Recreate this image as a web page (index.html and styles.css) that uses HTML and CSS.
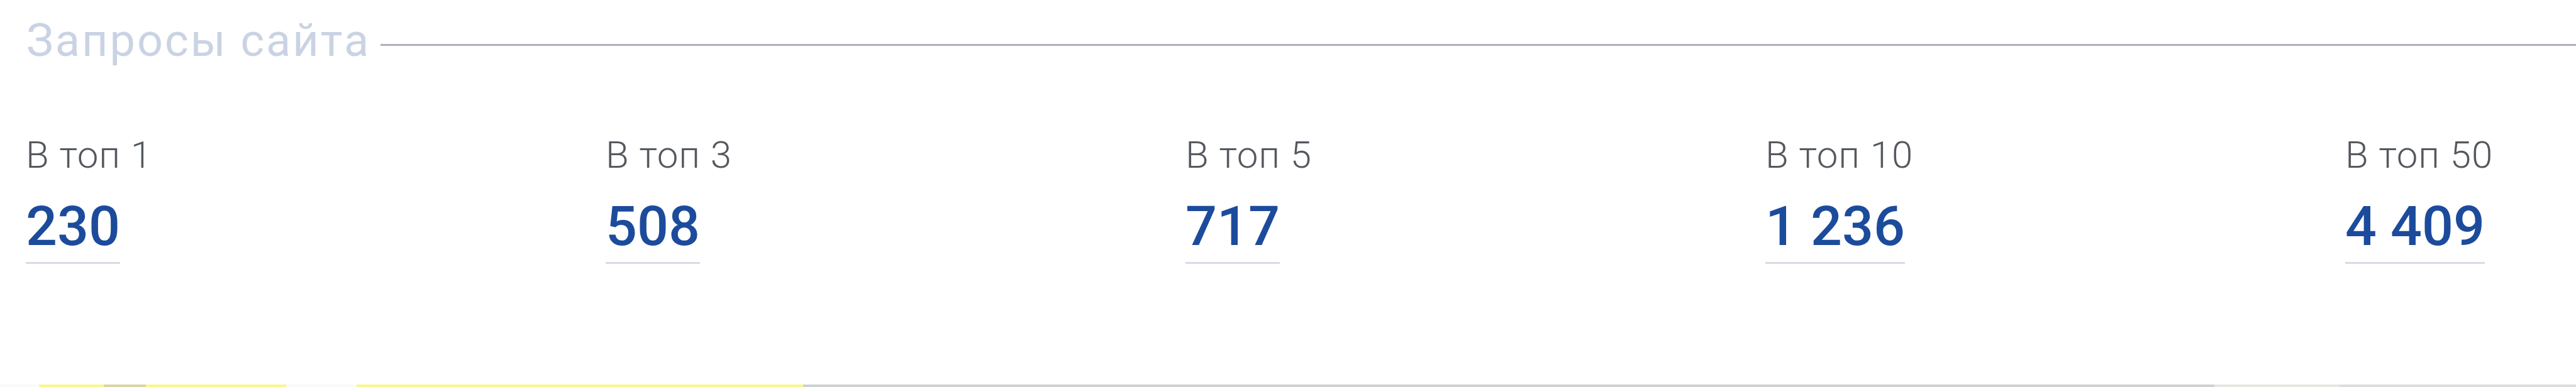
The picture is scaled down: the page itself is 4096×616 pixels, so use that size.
FILE: index.html
```html
<!DOCTYPE html>
<html lang="ru">
<head>
    <meta charset="UTF-8">
    <title>Запросы сайта</title>
    <link rel="stylesheet" href="styles.css">
</head>
<body>
    <div class="queries">
        <div class="queries-head">
            <h2 class="queries-title">Запросы сайта</h2>
            <span class="queries-rule"></span>
        </div>

        <ul class="stats">
            <li class="stat">
                <div class="stat-label">В топ 1</div>
                <div class="stat-value">230</div>
            </li>
            <li class="stat">
                <div class="stat-label">В топ 3</div>
                <div class="stat-value">508</div>
            </li>
            <li class="stat">
                <div class="stat-label">В топ 5</div>
                <div class="stat-value">717</div>
            </li>
            <li class="stat">
                <div class="stat-label">В топ 10</div>
                <div class="stat-value">1 236</div>
            </li>
            <li class="stat">
                <div class="stat-label">В топ 50</div>
                <div class="stat-value">4 409</div>
            </li>
        </ul>
    </div>

    <!-- верхний край следующего блока -->
    <div class="track">
        <span class="seg seg-gap" style="width: 62px"></span>
        <span class="seg seg-yellow" style="width: 103px"></span>
        <span class="seg seg-olive" style="width: 67px"></span>
        <span class="seg seg-yellow" style="width: 223px"></span>
        <span class="seg seg-gap" style="width: 112px"></span>
        <span class="seg seg-yellow" style="width: 710px"></span>
        <span class="seg seg-gray" style="width: 2244px"></span>
        <span class="seg seg-faint" style="width: 199px"></span>
        <span class="seg seg-light"></span>
    </div>
</body>
</html>
```

FILE: styles.css
```css
*{
    padding: 0;
    margin: 0;
}
html, body{
    background-color: #fff;
    overflow: hidden;
}
body{
    width: 4096px;
    height: 616px;
    font-family: Roboto, "Liberation Sans", Arial, sans-serif;
}

/* заголовок с линией */
.queries-head{
    display: flex;
    align-items: flex-start;
    padding: 22px 0 0 42px;
}
.queries-title{
    font-size: 72px;
    line-height: 86px;
    font-weight: 400;
    letter-spacing: 3px;
    color: #c9d3e3;
    white-space: nowrap;
}
.queries-rule{
    flex: 1;
    height: 3px;
    margin: 48px 0 0 16px;
    background-color: #aeb0b9;
}

/* счётчики позиций */
.stats{
    display: flex;
    list-style: none;
    margin-top: 103px;
    padding-left: 41px;
}
.stat{
    flex: 0 0 922px;
}
.stat:last-child{
    flex: 1 1 auto;  /* последняя колонка занимает остаток строки */
}
.stat-label{
    font-size: 60px;
    line-height: 72px;
    font-weight: 300;
    letter-spacing: 1px;
    color: #55585e;
    white-space: nowrap;
}
.stat-value{
    display: inline-block;
    margin-top: 24px;
    padding-bottom: 4px;
    font-size: 88px;
    line-height: 106px;
    font-weight: 500;
    color: #1c4b9c;
    border-bottom: 3px solid #dadae6;
    white-space: nowrap;
}

/* полоса внизу */
.track{
    display: flex;
    height: 5px;
    margin-top: 192px;
}
.seg{
    display: block;
    height: 100%;
}
.seg-gap{
    background-color: #fafafa;
}
.seg-yellow{
    background-color: #f6f78f;
}
.seg-olive{
    background-color: #d9d6a6;
}
.seg-gray{
    background-color: #cfd0d2;
}
.seg-faint{
    background-color: #e6e8e0;
}
.seg-light{
    flex: 1;
    background-color: #dcdddd;
}
```
